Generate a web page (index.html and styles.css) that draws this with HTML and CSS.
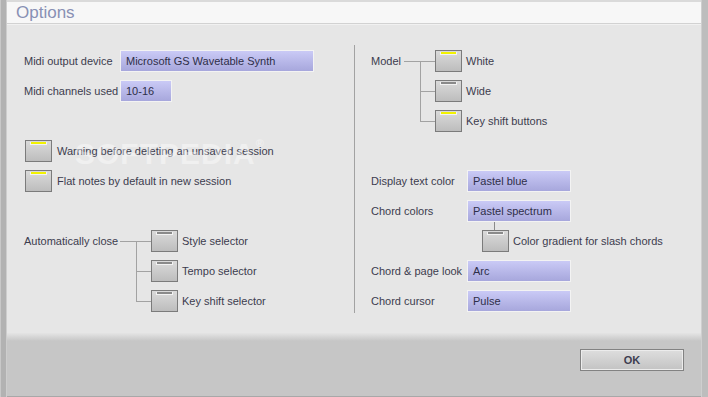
FILE: index.html
```html
<!DOCTYPE html>
<html lang="en">
<head>
<meta charset="UTF-8">
<title>Options</title>
<link rel="stylesheet" href="styles.css">
</head>
<body>
<div class="window">
  <div class="frame-left"></div>
  <div class="main">
    <div class="titlebar">Options</div>

    <div class="content">
      <div class="watermark">SOFTPEDIA<span class="reg">®</span></div>

      <div class="column left-col">
        <div class="row">
          <span class="label">Midi output device</span>
          <span class="select wide-select">Microsoft GS Wavetable Synth</span>
        </div>
        <div class="row">
          <span class="label">Midi channels used</span>
          <span class="select small-select">10-16</span>
        </div>
        <div class="row"></div>
        <div class="row">
          <span class="check on solo"></span>
          <span class="check-text">Warning before deleting an unsaved session</span>
        </div>
        <div class="row">
          <span class="check on solo"></span>
          <span class="check-text">Flat notes by default in new session</span>
        </div>
        <div class="row"></div>
        <div class="tree">
          <div class="tree-label auto-label">Automatically close</div>
          <div class="tree-items">
            <div class="row tree-item"><span class="check"></span><span class="check-text">Style selector</span></div>
            <div class="row tree-item"><span class="check"></span><span class="check-text">Tempo selector</span></div>
            <div class="row tree-item"><span class="check"></span><span class="check-text">Key shift selector</span></div>
          </div>
        </div>
      </div>

      <div class="column right-col">
        <div class="tree">
          <div class="tree-label model-label">Model</div>
          <div class="tree-items">
            <div class="row tree-item"><span class="check on"></span><span class="check-text">White</span></div>
            <div class="row tree-item"><span class="check"></span><span class="check-text">Wide</span></div>
            <div class="row tree-item"><span class="check on"></span><span class="check-text">Key shift buttons</span></div>
          </div>
        </div>
        <div class="row"></div>
        <div class="row">
          <span class="label">Display text color</span>
          <span class="select">Pastel blue</span>
        </div>
        <div class="row">
          <span class="label">Chord colors</span>
          <span class="select">Pastel spectrum</span>
        </div>
        <div class="row sub-row">
          <span class="check linked"></span>
          <span class="check-text">Color gradient for slash chords</span>
        </div>
        <div class="row">
          <span class="label">Chord &amp; page look</span>
          <span class="select">Arc</span>
        </div>
        <div class="row">
          <span class="label">Chord cursor</span>
          <span class="select">Pulse</span>
        </div>
      </div>
    </div>

    <div class="footer">
      <button class="ok-button">OK</button>
    </div>
  </div>
  <div class="frame-right"></div>
</div>
</body>
</html>
```

FILE: styles.css
```css
body {
  margin: 0;
  font-family: "Liberation Sans", Arial, sans-serif;
  font-size: 11px;
  color: #3c3c4e;
}

.window {
  display: flex;
  width: 708px;
  height: 397px;
  background: #e6e6e6;
}

.frame-left {
  width: 7px;
  background: linear-gradient(to right, #c8c8c8 0 1px, #b2b2b2 1px 6px, #cdcdcd 6px);
}

.frame-right {
  width: 7px;
  background: linear-gradient(to right, #cfcfcf 0 1px, #bdbdbd 1px);
}

.main {
  flex: 1;
  display: flex;
  flex-direction: column;
  border-top: 2px solid #dadada;
}

.titlebar {
  height: 21px;
  background: #f7f7f7;
  border-bottom: 1px solid #d2d2d2;
  box-shadow: 0 1px 0 #f1f1f1;
  padding-left: 9px;
  font-size: 17px;
  line-height: 22px;
  color: #8890b4;
}

.content {
  position: relative;
  height: 308px;
  box-sizing: border-box;
  padding: 20px 0 0 17px;
  margin-top: 1px;
  display: flex;
}

.column {
  display: flex;
  flex-direction: column;
  gap: 8px;
  padding-top: 5px;
  height: 268px;
  box-sizing: border-box;
}

.left-col {
  width: 330px;
}

.right-col {
  border-left: 1px solid #a2a2a2;
  padding-left: 16px;
}

.row {
  display: flex;
  align-items: center;
  height: 22px;
}

.label {
  width: 96px;
  flex-shrink: 0;
}

.select {
  box-sizing: border-box;
  width: 104px;
  height: 22px;
  line-height: 20px;
  padding-left: 5px;
  border: 1px solid #f3f3f3;
  background: linear-gradient(#cacaf6, #a7a7dc);
  color: #2e2e48;
}

.wide-select {
  width: 194px;
}

.small-select {
  width: 52px;
}

.check {
  position: relative;
  flex-shrink: 0;
  box-sizing: border-box;
  width: 27px;
  height: 22px;
  border: 1px solid #7b7b7b;
  background: linear-gradient(#dadada, #bdbdbd);
}

.check.solo {
  margin-left: 1px;
  margin-right: 1px;
}

.check::after {
  content: '';
  position: absolute;
  left: 4px;
  top: 1px;
  width: 15px;
  height: 2px;
  background: #8a8a8a;
  border: 1px solid #f2f2f2;
  border-top: 0;
}

.check.on::after {
  background: #f2f200;
}

.check-text {
  margin-left: 4px;
}

.tree {
  display: flex;
}

.tree-label {
  height: 22px;
  line-height: 22px;
  flex-shrink: 0;
}

.auto-label {
  width: 127px;
}

.model-label {
  width: 64px;
}

.tree-items {
  position: relative;
  display: flex;
  flex-direction: column;
  gap: 8px;
}

.tree-items::before {
  content: '';
  position: absolute;
  left: -15px;
  top: 11px;
  bottom: 11px;
  border-left: 1px solid #a2a2a2;
}

.tree-item {
  position: relative;
}

.tree-item::before {
  content: '';
  position: absolute;
  left: -15px;
  top: 11px;
  width: 15px;
  border-top: 1px solid #a2a2a2;
}

.tree-item:first-child::before {
  left: -31px;
  width: 31px;
}

.sub-row {
  padding-left: 111px;
}

.check.linked::before {
  content: '';
  position: absolute;
  left: 11px;
  top: -9px;
  height: 8px;
  border-left: 1px solid #8a8a8a;
}

.watermark {
  position: absolute;
  left: 68px;
  top: 112px;
  font-size: 30px;
  font-weight: bold;
  letter-spacing: 1px;
  color: #ffffff;
  opacity: 0.4;
}

.watermark .reg {
  font-size: 11px;
  vertical-align: top;
}

.footer {
  flex: 1;
  display: flex;
  justify-content: flex-end;
  align-items: flex-start;
  padding: 16px 17px 0 0;
  background: linear-gradient(#e4e4e4 0, #c6c6c6 8px, #c6c6c6);
  border-bottom: 1px solid #a8a8a8;
}

.ok-button {
  width: 104px;
  height: 22px;
  border: 1px solid #828282;
  box-shadow: inset 0 0 0 1px #ececec;
  background: linear-gradient(#dedede, #c3c3c3);
  font-family: "Liberation Sans", Arial, sans-serif;
  font-size: 11px;
  font-weight: bold;
  color: #3e3e50;
  padding: 0;
}
```
